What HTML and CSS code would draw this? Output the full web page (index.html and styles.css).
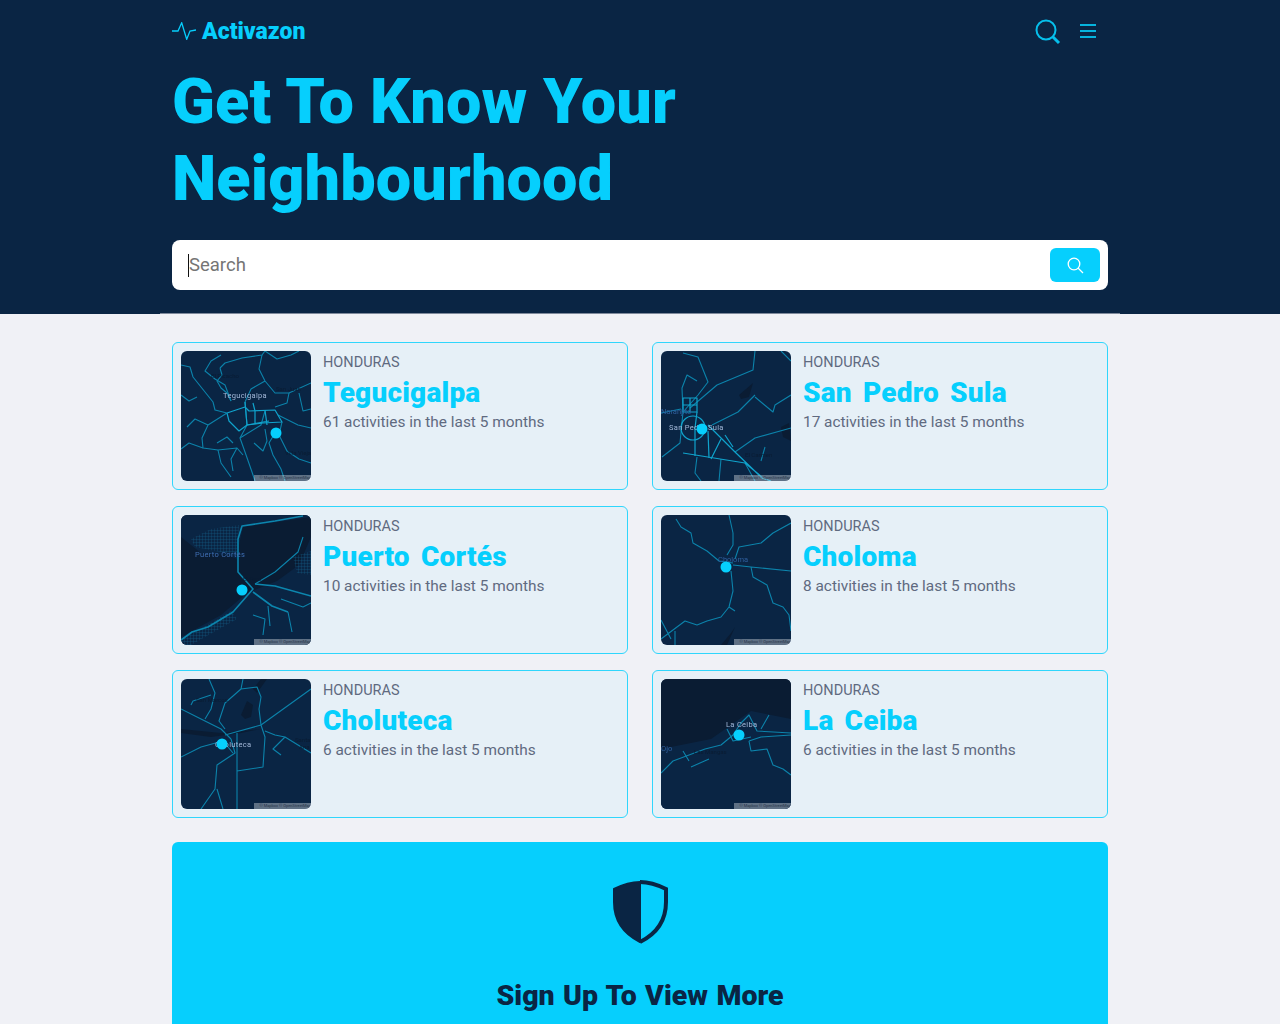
FILE: index.html
```html
<!DOCTYPE html>
<html lang="en">
<head>
    <meta charset="UTF-8">
    <meta name="viewport" content="width=device-width, initial-scale=1.0">
    <title>Activazon</title>
    <link rel="stylesheet" href="styles.css">
</head>
<body>

<header class="site-header">
    <div class="wrap header-inner">
        <!-- Top nav -->
        <nav class="nav">
            <a class="logo" href="#">
                <svg class="logo-icon" width="24" height="18" viewBox="0 0 24 18"><path d="M0 9H6L9.7 .8 14.7 17.3 18 9 24 8"/></svg>
                <span>Activazon</span>
            </a>
            <div class="nav-icons">
                <svg class="icon-search" width="26" height="26" viewBox="0 0 26 26"><circle cx="11" cy="11" r="9.5"/><path class="handle" d="M18 18L24 24"/></svg>
                <svg class="icon-menu" width="16" height="14" viewBox="0 0 16 14"><path d="M0 1H16M0 7H16M0 13H16"/></svg>
            </div>
        </nav>

        <h1>Get To Know Your Neighbourhood</h1>

        <!-- Search -->
        <form class="search-box">
            <span class="caret"></span>
            <input class="search-input" type="text" placeholder="Search">
            <button class="search-btn" type="button">
                <svg width="17" height="17" viewBox="0 0 17 17"><circle cx="7" cy="7" r="5.8"/><path d="M11 11L16 16"/></svg>
            </button>
        </form>
    </div>
</header>

<main class="wrap">
    <section class="cards">

        <a class="card" href="#">
            <div class="thumb">
                <svg viewBox="0 0 130 130">
                    <g class="road">
                        <path d="M39 17L44 12 61 7 81 4 84 0M39 17L41 24 36 30 40 37 46 42 50 50"/>
                        <path d="M0 14L9 16 12 26 24 41 32 51 34 59 46 62M46 62L27 74 21 87 22 97 37 99 56 97 62 104"/>
                        <path d="M64 51L66 74 59 87 64 101 71 121 74 130M84 0L96 8 110 4 118 0M81 4L78 18 84 30 94 42 108 42 130 32"/>
                        <path d="M97 64L117 74 130 77M101 71L98 84 106 100 118 108 130 112M94 82L88 92 92 104 100 118 104 130"/>
                        <path d="M0 44L8 50 16 46M27 74L14 68 6 76M22 97L8 92 0 98M37 99L40 112 50 126M56 97L50 108 52 120"/>
                        <path d="M108 42L106 52 94 56M118 42L122 60 130 58M84 30L70 38 64 51M50 50L44 34 34 28 24 20 30 10 40 4"/>
                        <path d="M59 87L80 74 84 60M73 92L82 100 86 90 84 78M36 92L46 86 52 92"/>
                    </g>
                    <g class="road-bright">
                        <path d="M46 62L64 56 68 60 94 59 101 71 82 72 66 74 58 80 48 70 46 62"/>
                        <path d="M64 51L66 74M74 60V72M84 59L86 74M66 74L88 70M72 52L74 60"/>
                    </g>
                    <text class="map-dark" x="30" y="27">El Picacho</text>
                    <text class="map-dark" x="95" y="40">San Juan</text>
                    <text class="map-dark" x="104" y="104">Villa Vieja</text>
                    <text class="map-label" x="42" y="47">Tegucigalpa</text>
                    <circle class="pin" cx="95" cy="82" r="5.5"/>
                </svg>
                <span class="attrib">© Mapbox © OpenStreetMap</span>
            </div>
            <div class="card-body">
                <div class="country">HONDURAS</div>
                <h2>Tegucigalpa</h2>
                <p>61 activities in the last 5 months</p>
            </div>
        </a>

        <a class="card" href="#">
            <div class="thumb">
                <svg viewBox="0 0 130 130">
                    <path class="shade" d="M78 44L92 32 88 46 80 48ZM120 76L128 72 130 90 122 86Z"/>
                    <g class="road">
                        <path d="M22 2L37 6 47 31 37 44 22 61M94 0L92 19 56 34 29 57M94 44L77 61 61 69 51 74"/>
                        <path d="M130 44L114 54 112 61 94 46M130 77L94 87 74 101M1 106L19 92 22 61 21 37 26 24 36 30"/>
                        <path d="M120 0L130 10M0 62L20 58M84 112L94 130M60 108L58 130M36 106L34 122 40 130M104 96L100 110"/>
                    </g>
                    <g class="road-bright">
                        <path d="M22 47H36V61H22ZM29 47V61M22 54H36M20 77A12 12 0 1 0 44 77 12 12 0 1 0 20 77"/>
                        <path d="M47 74L74 101 101 127 110 130M22 102L84 112 101 126"/>
                        <path d="M34 77V105M47 80L48 107M60 88L50 108M64 84L72 96M36 61L34 77"/>
                    </g>
                    <text class="map-label" x="8" y="79">San Pedro Sula</text>
                    <text class="map-dark-label" x="0" y="63">Naranjito</text>
                    <text class="map-dark" x="84" y="106">El Carmen</text>
                    <circle class="pin" cx="41" cy="78" r="5.5"/>
                </svg>
                <span class="attrib">© Mapbox © OpenStreetMap</span>
            </div>
            <div class="card-body">
                <div class="country">HONDURAS</div>
                <h2>San Pedro Sula</h2>
                <p>17 activities in the last 5 months</p>
            </div>
        </a>

        <a class="card" href="#">
            <div class="thumb">
                <svg viewBox="0 0 130 130">
                    <defs>
                        <pattern id="streets" width="3" height="3" patternUnits="userSpaceOnUse">
                            <path d="M0 0H3M0 0V3" stroke="#10567d" stroke-width=".7"/>
                        </pattern>
                    </defs>
                    <rect class="water" width="130" height="130"/>
                    <path class="land" d="M0 0H130V2L62 12 58 30 56 44 46 40 20 38 0 22ZM130 22L118 50 96 66 66 78 40 100 0 122V130H130Z"/>
                    <path class="city" fill="url(#streets)" d="M10 24L30 14 58 10 56 40 34 36 14 32ZM112 42L130 36V60L116 58Z"/>
                    <path class="city" fill="url(#streets)" d="M0 124L30 108 50 96 56 104 24 122 10 130H0Z"/>
                    <g class="road-thick">
                        <path d="M122 1L94 6 61 11 57 24 57 57 72 74 52 97 27 112 11 117 0 125"/>
                        <path d="M74 69L94 71 130 81M72 77L91 91 107 97"/>
                    </g>
                    <g class="road">
                        <path d="M122 22L117 37 94 57 74 69M107 97L111 117M87 91L89 111M72 100L84 104 82 120M100 84L122 92 130 88"/>
                    </g>
                    <text class="map-label map-blue" x="14" y="42">Puerto Cortés</text>
                    <text class="map-dark" x="62" y="66">El Faro</text>
                    <circle class="pin" cx="61" cy="75" r="5.5"/>
                </svg>
                <span class="attrib">© Mapbox © OpenStreetMap</span>
            </div>
            <div class="card-body">
                <div class="country">HONDURAS</div>
                <h2>Puerto Cortés</h2>
                <p>10 activities in the last 5 months</p>
            </div>
        </a>

        <a class="card" href="#">
            <div class="thumb">
                <svg viewBox="0 0 130 130">
                    <path class="shade" d="M60 130L70 118 74 112 66 130Z"/>
                    <g class="road">
                        <path d="M68 0L72 18 72 30 66 40M15 4L20 12 30 18 32 28 46 36 58 46 72 48M74 44L78 32 100 28 112 18 130 8"/>
                        <path d="M72 50L90 52 130 56M90 52L92 62 106 70 112 88 122 92 128 100 130 116"/>
                        <path d="M70 56L72 76 68 92 60 102 46 106 36 110 24 106 0 124M68 92L74 96M0 105L10 124M14 116L14 130"/>
                    </g>
                    <text class="map-dark-label" x="57" y="47">Choloma</text>
                    <circle class="pin" cx="65" cy="52" r="5.5"/>
                </svg>
                <span class="attrib">© Mapbox © OpenStreetMap</span>
            </div>
            <div class="card-body">
                <div class="country">HONDURAS</div>
                <h2>Choloma</h2>
                <p>8 activities in the last 5 months</p>
            </div>
        </a>

        <a class="card" href="#">
            <div class="thumb">
                <svg viewBox="0 0 130 130">
                    <path class="shade" d="M60 36L66 22 72 26 70 38 64 40ZM0 50L40 54 80 50 60 54 30 58 0 54ZM86 0H80L72 10 76 14Z"/>
                    <g class="road">
                        <path d="M28 0L34 14 30 30 24 40M0 30L20 40 40 50 50 60M62 0L60 10 44 24 38 42 44 50M60 10L76 8 80 18 78 30 80 46"/>
                        <path d="M130 10L80 46 44 56M80 46L84 58 82 88 56 92M56 54L56 92 56 130M50 60L54 74 36 86 34 110 20 130M36 110L42 130M0 78L20 68 42 62 52 74"/>
                        <path d="M84 52L94 56 104 58 92 70 100 76M104 58L130 74M30 16L12 22 10 26"/>
                    </g>
                    <text class="map-dark" x="15" y="23">San Marcos</text>
                    <text class="map-dark" x="114" y="63">Santa</text>
                    <text class="map-dark" x="118" y="70">Ana</text>
                    <text class="map-label" x="34" y="68">Choluteca</text>
                    <circle class="pin" cx="41" cy="65" r="5.5"/>
                </svg>
                <span class="attrib">© Mapbox © OpenStreetMap</span>
            </div>
            <div class="card-body">
                <div class="country">HONDURAS</div>
                <h2>Choluteca</h2>
                <p>6 activities in the last 5 months</p>
            </div>
        </a>

        <a class="card" href="#">
            <div class="thumb">
                <svg viewBox="0 0 130 130">
                    <rect class="water" width="130" height="130"/>
                    <path class="land" d="M0 70L50 60 70 46 90 32 130 40V130H0Z"/>
                    <g class="road">
                        <path d="M0 94L12 82 44 70 60 66 72 56 80 44 88 36 96 52 130 54M100 50L108 36M88 62L100 58 130 56M88 62L90 72 106 70 112 86 122 90 130 96"/>
                        <path d="M22 72L28 82M30 88L48 80M66 50L72 62 90 58"/>
                    </g>
                    <text class="map-label" x="65" y="48">La Ceiba</text>
                    <text class="map-dark" x="33" y="75">Las Mangas</text>
                    <text class="map-dark-label" x="0" y="72">Ojo</text>
                    <circle class="pin" cx="78" cy="56" r="5.5"/>
                </svg>
                <span class="attrib">© Mapbox © OpenStreetMap</span>
            </div>
            <div class="card-body">
                <div class="country">HONDURAS</div>
                <h2>La Ceiba</h2>
                <p>6 activities in the last 5 months</p>
            </div>
        </a>

    </section>

    <!-- Sign up banner -->
    <section class="signup">
        <svg class="shield" width="56" height="64" viewBox="0 0 56 64">
            <path class="shield-fill" d="M28 2V62C12 54 2 42 2 22V9C10 5 20 2 28 2Z"/>
            <path class="shield-line" d="M28 2C36 2 46 5 54 9V22C54 42 44 54 28 62"/>
        </svg>
        <h3>Sign Up To View More</h3>
    </section>
</main>

</body>
</html>
```

FILE: styles.css
```css
* {
    box-sizing: border-box;
}
html, body {
    height: 100%;
    overflow: hidden;
}
body {
    margin: 0;
    background-color: #f0f1f6;
    font-family: Roboto, "Liberation Sans", sans-serif;
    color: #5f6a80;
}
a {
    color: inherit;
    text-decoration: none;
}
.wrap {
    width: 960px;
    margin: 0 auto;
    padding: 0 12px;
}

/* Header */
.site-header {
    background-color: #0a2544;
}
.header-inner {
    padding-bottom: 23px;
    border-bottom: 1px solid #7f8a9c;
    height: 314px;
}
.nav {
    display: flex;
    justify-content: space-between;
    align-items: center;
    height: 62px;
}
.logo {
    display: flex;
    align-items: center;
    gap: 6px;
    color: #06cffd;
    font-size: 23px;
    font-weight: 900;
}
.logo-icon path {
    fill: none;
    stroke: #06cffd;
    stroke-width: 1.3;
}
.nav-icons {
    display: flex;
    align-items: center;
    gap: 19px;
    padding-right: 12px;
}
.icon-search {
    margin-top: 2px;
}
.icon-search circle {
    fill: none;
    stroke: #06bfeb;
    stroke-width: 2;
}
.icon-search .handle {
    fill: none;
    stroke: #06bfeb;
    stroke-width: 3;
}
.icon-menu path {
    fill: none;
    stroke: #06b4de;
    stroke-width: 2;
}
h1 {
    margin: 1px 0 23px;
    width: 620px;
    color: #06cffd;
    font-size: 63px;
    font-weight: 900;
    line-height: 77px;
    letter-spacing: 0.1px;
}
.search-box {
    display: flex;
    align-items: center;
    height: 50px;
    padding: 0 8px 0 16px;
    background: white;
    border-radius: 8px;
}
.caret {
    width: 1px;
    height: 23px;
    background: #111;
}
.search-input {
    flex: 1;
    border: none;
    outline: none;
    padding: 0;
    background: none;
    font-family: inherit;
    font-size: 18.5px;
    caret-color: transparent;
}
.search-input::placeholder {
    color: #757575;
}
.search-btn {
    display: flex;
    align-items: center;
    justify-content: center;
    width: 50px;
    height: 34px;
    padding: 0;
    border: none;
    border-radius: 6px;
    background-color: #06cffd;
}
.search-btn svg {
    fill: none;
    stroke: white;
    stroke-width: 1.3;
}

/* City cards */
.cards {
    display: grid;
    grid-template-columns: 1fr 1fr;
    gap: 16px 24px;
    padding-top: 28px;
}
.card {
    display: flex;
    gap: 12px;
    height: 148px;
    padding: 8px;
    background-color: #e6f0f7;
    border: 1px solid #2fd6fc;
    border-radius: 6px;
}
.thumb {
    position: relative;
    flex: none;
    width: 130px;
    height: 130px;
    border-radius: 6px;
    overflow: hidden;
    background-color: #0a2544;
}
.thumb svg {
    display: block;
    width: 130px;
    height: 130px;
    filter: blur(0.45px);
}
.road, .road-bright, .road-thick {
    fill: none;
    stroke-linejoin: round;
}
.road {
    stroke: #0c83ab;
    stroke-width: 1.1;
}
.road-bright {
    stroke: #10a3cc;
    stroke-width: 1.2;
}
.road-thick {
    stroke: #0c86ae;
    stroke-width: 1.6;
}
.water {
    fill: #0a1c33;
}
.land {
    fill: #0a2544;
}
.shade {
    fill: #0a1c33;
}
.pin {
    fill: #06cffd;
}
.map-label, .map-dark, .map-dark-label {
    font-size: 7.5px;
}
.map-label {
    fill: #a3b8d8;
    letter-spacing: 0.3px;
}
.map-blue {
    fill: #3f6fb5;
}
.map-dark {
    fill: #0a1c33;
    font-size: 6px;
}
.map-dark-label {
    fill: #2f5f9e;
}
.attrib {
    position: absolute;
    right: 0;
    bottom: 0;
    width: 57px;
    height: 6px;
    overflow: hidden;
    background: rgba(255, 255, 255, 0.35);
    color: #26344a;
    font-size: 4px;
    line-height: 6px;
    white-space: nowrap;
    text-align: right;
}
.card-body {
    padding-top: 1px;
}
.country {
    font-size: 14.5px;
    line-height: 22px;
}
h2 {
    margin: 2px 0 0;
    color: #06cffd;
    font-size: 28px;
    font-weight: 900;
    line-height: 34px;
    letter-spacing: 0.2px;
    word-spacing: 4px;
}
.card-body p {
    margin: 1px 0 0;
    font-size: 15.4px;
    line-height: 22px;
}

/* Sign up banner */
.signup {
    display: flex;
    flex-direction: column;
    align-items: center;
    margin-top: 24px;
    padding: 38px 0 60px;
    background-color: #06cffd;
    border-radius: 6px;
}
.shield-fill {
    fill: #0a2544;
    stroke: #0a2544;
    stroke-width: 2;
    stroke-linejoin: round;
}
.shield-line {
    fill: none;
    stroke: #0a2544;
    stroke-width: 4;
}
h3 {
    margin: 34px 0 0;
    color: #0a2544;
    font-size: 28.5px;
    font-weight: 900;
    line-height: 36px;
    word-spacing: 1.3px;
}
```
